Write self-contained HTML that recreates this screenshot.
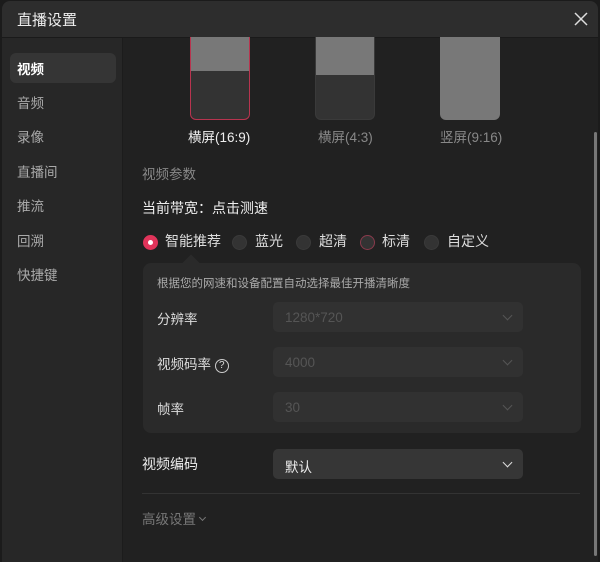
<!DOCTYPE html>
<html><head><meta charset="utf-8"><style>
*{margin:0;padding:0;box-sizing:border-box}
body{width:600px;height:562px;background:#1b1b1b;font-family:"Liberation Sans","Noto Sans CJK SC",sans-serif;position:relative;overflow:hidden;color:#e8e8e8}
.win{position:absolute;left:2px;top:1px;width:596px;height:561px;background:#212121;border-radius:8px 8px 0 0;overflow:hidden}
.hdr{position:absolute;left:0;top:0;width:596px;height:37px;background:#2d2d2d;border-bottom:1px solid #1a1a1a}
.hdr .t{position:absolute;left:15px;top:8px;font-size:15px;color:#eee}
.side{position:absolute;left:0;top:37px;width:121px;height:530px;background:#272727;border-right:1px solid #1c1c1c}
.si{position:absolute;left:15px;font-size:13.5px;color:#aaa}
.sel{position:absolute;left:8px;top:15px;width:106px;height:30px;background:#353535;border-radius:6px}
.a{position:absolute}
.card{position:absolute;top:36px;width:60px;height:83px;border-radius:0 0 6px 6px;background:#333;overflow:hidden}
.lbl{position:absolute;top:125px;font-size:13.5px;color:#888}
.radio{position:absolute;top:234px;width:15px;height:15px;border-radius:50%;background:#333;border:1px solid #3a3a3a}
.rl{position:absolute;top:230px;font-size:14px;color:#ddd}
.panel{position:absolute;left:141px;top:262px;width:438px;height:170px;background:#2a2a2a;border-radius:8px}
.row{position:absolute;left:155px;font-size:13.5px;color:#ddd}
.selbox{position:absolute;left:271px;width:250px;height:30px;background:#313131;border-radius:5px;color:#555;font-size:13.5px;padding:7px 12px}
.chev{position:absolute;right:12px;top:10px;width:7px;height:7px;border-right:1.5px solid #555;border-bottom:1.5px solid #555;transform:rotate(45deg)}
</style></head><body>
<div class="win">
<div class="hdr"><div class="t">直播设置</div>
<svg class="a" style="left:572px;top:11px" width="14" height="14"><path d="M1 1L13 13M13 1L1 13" stroke="#ddd" stroke-width="1.5"/></svg></div>
<div class="side">
<div class="sel"></div>
<div class="si" style="top:20px;color:#fff;font-weight:bold">视频</div>
<div class="si" style="top:54px">音频</div>
<div class="si" style="top:88px">录像</div>
<div class="si" style="top:123px">直播间</div>
<div class="si" style="top:157px">推流</div>
<div class="si" style="top:192px">回溯</div>
<div class="si" style="top:226px">快捷键</div>
</div>
<div class="card" style="left:188px;border:1.5px solid #b8344f;border-top:none"><div style="height:34px;background:#787878"></div></div>
<div class="card" style="left:313px;border:1px solid #3a3a3a;border-top:none"><div style="height:38px;background:#787878"></div></div>
<div class="card" style="left:438px;background:#787878"></div>
<div class="lbl" style="left:186px;color:#eee">横屏(16:9)</div>
<div class="lbl" style="left:316px">横屏(4:3)</div>
<div class="lbl" style="left:438px">竖屏(9:16)</div>
<div class="a" style="left:140px;top:162px;font-size:13.5px;color:#888">视频参数</div>
<div class="a" style="left:140px;top:197px;font-size:14px;color:#eee">当前带宽：点击测速</div>
<div class="radio" style="left:141px;background:#e0345a;border-color:#e0345a"><div style="position:absolute;left:4px;top:4px;width:5px;height:5px;border-radius:50%;background:#fff"></div></div>
<div class="rl" style="left:163px">智能推荐</div>
<div class="radio" style="left:230px"></div><div class="rl" style="left:253px">蓝光</div>
<div class="radio" style="left:294px"></div><div class="rl" style="left:317px">超清</div>
<div class="radio" style="left:358px;border-color:#8a3a4c"></div><div class="rl" style="left:380px">标清</div>
<div class="radio" style="left:422px"></div><div class="rl" style="left:445px">自定义</div>
<div class="panel"></div>
<div class="a" style="left:183px;top:256px;width:12px;height:12px;background:#2a2a2a;transform:rotate(45deg)"></div>
<div class="a" style="left:155px;top:274px;font-size:11.5px;color:#aaa">根据您的网速和设备配置自动选择最佳开播清晰度</div>
<div class="row" style="top:307px">分辨率</div>
<div class="selbox" style="top:301px;padding-top:8px">1280*720<div class="chev"></div></div>
<div class="row" style="top:352px">视频码率 <span style="display:inline-block;width:14px;height:14px;border:1.3px solid #ccc;border-radius:50%;font-size:10px;text-align:center;line-height:12px;vertical-align:1px">?</span></div>
<div class="selbox" style="top:346px;padding-top:8px">4000<div class="chev"></div></div>
<div class="row" style="top:397px">帧率</div>
<div class="selbox" style="top:391px;padding-top:8px">30<div class="chev"></div></div>
<div class="a" style="left:140px;top:453px;font-size:14px;color:#eee">视频编码</div>
<div class="selbox" style="top:448px;background:#363636;color:#eee">默认<div class="chev" style="border-color:#ddd"></div></div>
<div class="a" style="left:140px;top:492px;width:438px;height:1px;background:#333"></div>
<div class="a" style="left:140px;top:507px;font-size:13.5px;color:#777">高级设置<span style="display:inline-block;width:5px;height:5px;border-right:1.3px solid #777;border-bottom:1.3px solid #777;transform:rotate(45deg);margin-left:4px;vertical-align:4px"></span></div>
<div class="a" style="left:592px;top:131px;width:3px;height:424px;background:#777;border-radius:2px"></div>
</div>
</body></html>
